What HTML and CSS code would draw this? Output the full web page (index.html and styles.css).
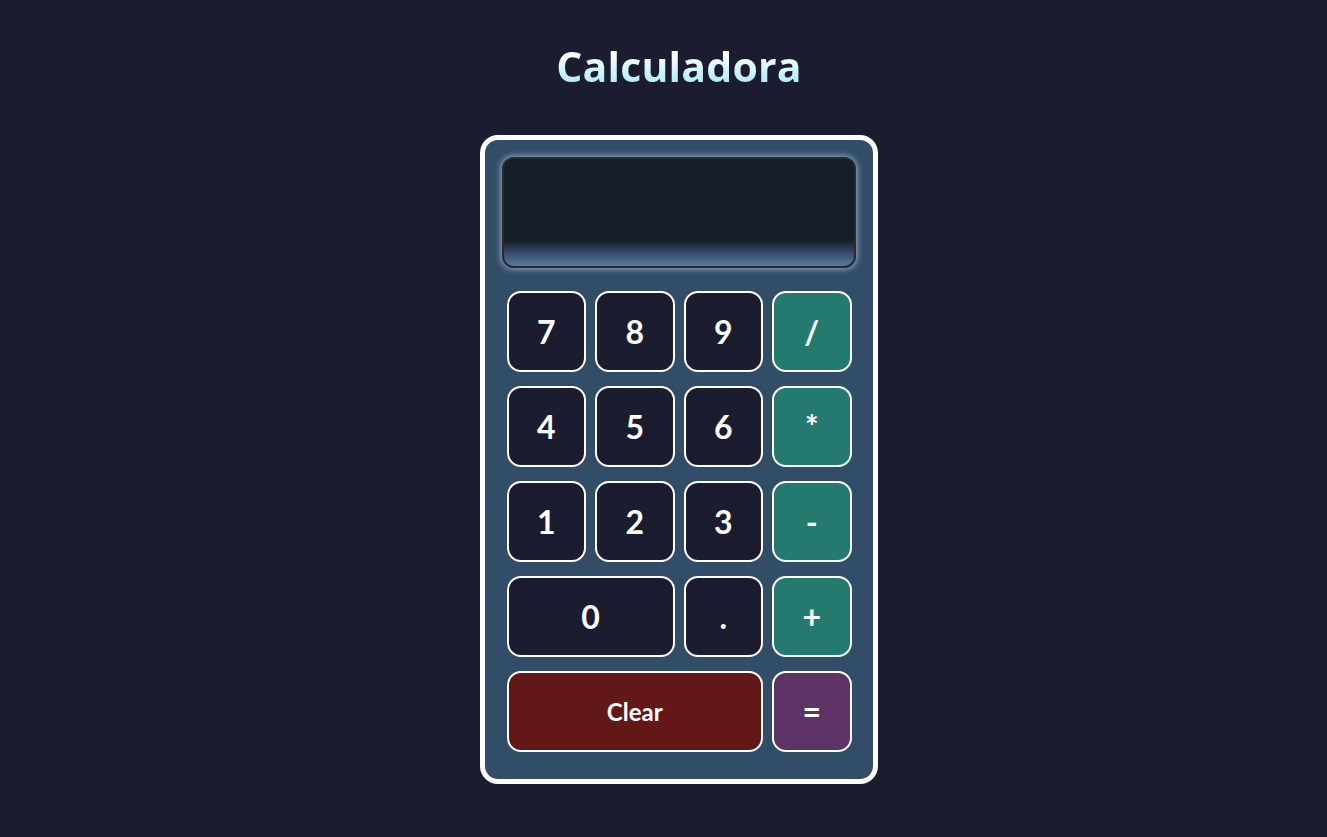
FILE: index.html
```html
<!DOCTYPE html>
<html lang="pt">
<head>
<meta charset="utf-8">
<title>Calculadora</title>
<link rel="stylesheet" href="styles.css">
</head>
<body>
<main class="page">
  <h1 class="title">Calculadora</h1>
  <div class="calculator">
    <div class="display"></div>
    <div class="keys">
      <button class="key">7</button>
      <button class="key">8</button>
      <button class="key">9</button>
      <button class="key op">/</button>
      <button class="key">4</button>
      <button class="key">5</button>
      <button class="key">6</button>
      <button class="key op">*</button>
      <button class="key">1</button>
      <button class="key">2</button>
      <button class="key">3</button>
      <button class="key op">-</button>
      <button class="key span2">0</button>
      <button class="key">.</button>
      <button class="key op">+</button>
      <button class="key span3 clear">Clear</button>
      <button class="key equals">=</button>
    </div>
  </div>
</main>
</body>
</html>
```
FILE: styles.css
```css
html, body {
  margin: 0;
  padding: 0;
  background: #1c1c30;
  height: 100%;
}
.page {
  display: flex;
  flex-direction: column;
  align-items: center;
  padding-top: 34px;
  padding-left: 31px;
}
.title {
  margin: 0;
  font-family: "Open Sans", "Noto Sans", sans-serif;
  font-weight: 700;
  font-size: 41px;
  line-height: 64px;
  letter-spacing: 0.2px;
  background: linear-gradient(to bottom, #ffffff 30%, #8ae2f7 100%);
  -webkit-background-clip: text;
  background-clip: text;
  color: transparent;
}
.calculator {
  margin-top: 37px;
  width: 388px;
  box-sizing: content-box;
  background: #324d68;
  border: 5px solid #ffffff;
  border-radius: 18px;
  padding: 17px 0 27px;
  display: flex;
  flex-direction: column;
  align-items: center;
}
.display {
  width: 350px;
  height: 107px;
  border: 2px solid #262a33;
  border-radius: 12px;
  background: linear-gradient(to bottom, #161e28 0%, #161e28 76%, #3d5878 91%, #5a7a9c 100%);
  box-shadow: 0 0 6px 1px rgba(230, 240, 255, 0.6);
}
.keys {
  margin-top: 23px;
  width: 345px;
  display: grid;
  grid-template-columns: repeat(4, 1fr);
  grid-auto-rows: 81px;
  column-gap: 9px;
  row-gap: 14px;
}
.key {
  font-family: "Lato", sans-serif;
  font-weight: 700;
  font-size: 32px;
  color: #ffffff;
  background: #1c1c30;
  border: 2px solid #ffffff;
  border-radius: 14px;
  padding: 0;
  cursor: pointer;
}
.op { background: #257a70; }
.span2 { grid-column: span 2; }
.span3 { grid-column: span 3; }
.clear { background: #631818; font-size: 24px; }
.equals { background: #5e3366; }
```
